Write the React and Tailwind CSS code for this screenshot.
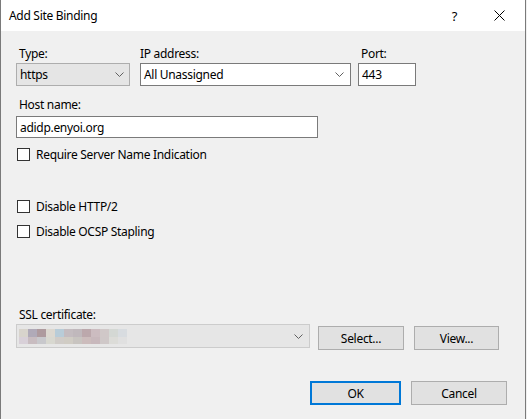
import React from "react";

const Chevron = () => (
  <svg width="9" height="5" viewBox="0 0 9 5" className="shrink-0">
    <path d="M0.5 0.5 L4.5 4.5 L8.5 0.5" fill="none" stroke="#606060" strokeWidth="1" />
  </svg>
);

const Check = ({ label, className = "" }) => (
  <div className={`flex items-center h-[13px] ${className}`}>
    <div className="w-[13px] h-[13px] bg-white border border-[#333333] shrink-0" />
    <span className="ml-[6px] leading-[15px]">{label}</span>
  </div>
);

const blocks1 = ["#d8d4cc", "#b0aab8", "#ae9a9e", "#dcd8d0", "#b8ccd8", "#c4bcc0", "#c0b8bc", "#bca8ac", "#ccbcc0", "#d0c8c8", "#d4d8d4", "#d8dce0"];
const blocks2 = ["#d8d0d8", "#c8bcc0", "#c8c8cc", "#d8d8d0", "#d0ccc8", "#d0ccc4", "#c8c4c0", "#ccbcbc", "#c8b8bc", "#cfc8c8", "#dcdcd8", "#e0e0e0"];

export default function App() {
  return (
    <div
      className="w-[527px] h-[419px] bg-[#f0f0f0] text-black text-[12px] tracking-[-0.3px] overflow-hidden"
      style={{ fontFamily: '"Noto Sans", "Open Sans", sans-serif' }}
    >
      <div className="w-[526px] h-[419px] border-x border-[#7a7a7a] flex flex-col bg-[#f0f0f0]">
        {/* Title bar */}
        <div className="h-[31px] bg-white flex items-center shrink-0">
          <span className="ml-[8px] leading-[16px]">Add Site Binding</span>
          <span className="ml-auto mr-[37px] leading-[16px] text-[13px]">?</span>
          <svg width="11" height="11" viewBox="0 0 11 11" className="mr-[20px]">
            <path d="M0.5 0.5 L10.5 10.5 M10.5 0.5 L0.5 10.5" stroke="#000" strokeWidth="1" />
          </svg>
        </div>

        {/* Body */}
        <div className="flex flex-col pl-[15px] pt-[15px] flex-1">
          {/* Row 1 */}
          <div className="flex">
            <div className="flex flex-col w-[114px]">
              <span className="h-[15px] leading-[15px] ml-[3px]">Type:</span>
              <div className="mt-[2px] h-[23px] bg-[#e5e5e5] border border-[#adadad] flex items-center pl-[3px] pr-[5px]">
                <span className="leading-[15px]">https</span>
                <span className="ml-auto"><Chevron /></span>
              </div>
            </div>
            <div className="flex flex-col w-[211px] ml-[10px]">
              <span className="h-[15px] leading-[15px]">IP address:</span>
              <div className="mt-[2px] h-[23px] bg-white border border-[#7a7a7a] flex items-center pl-[3px] pr-[6px]">
                <span className="leading-[15px]">All Unassigned</span>
                <span className="ml-auto"><Chevron /></span>
              </div>
            </div>
            <div className="flex flex-col w-[58px] ml-[7px]">
              <span className="h-[15px] leading-[15px] ml-[3px]">Port:</span>
              <div className="mt-[2px] h-[23px] bg-white border border-[#7a7a7a] flex items-center pl-[3px]">
                <span className="leading-[15px]">443</span>
              </div>
            </div>
          </div>

          {/* Host name */}
          <span className="mt-[11px] h-[15px] leading-[15px] ml-[3px]">Host name:</span>
          <div className="mt-[4px] w-[302px] h-[22px] bg-white border border-[#7a7a7a] flex items-center pl-[3px]">
            <span className="leading-[15px]">adidp.enyoi.org</span>
          </div>

          <Check label="Require Server Name Indication" className="mt-[10px] ml-[1px]" />
          <Check label="Disable HTTP/2" className="mt-[39px] ml-[1px]" />
          <Check label="Disable OCSP Stapling" className="mt-[12px] ml-[1px]" />

          {/* SSL certificate */}
          <span className="mt-[69px] h-[15px] leading-[15px] ml-[3px]">SSL certificate:</span>
          <div className="flex items-start mt-[2px]">
            <div className="w-[294px] h-[24px] bg-[#e6e6e6] border border-[#cccccc] flex items-center pl-[2px] pr-[6px]">
              <div className="flex flex-col">
                <div className="flex">
                  {blocks1.map((c, i) => (
                    <div key={i} className="w-[9px] h-[8px]" style={{ background: c }} />
                  ))}
                </div>
                <div className="flex">
                  {blocks2.map((c, i) => (
                    <div key={i} className="w-[9px] h-[7px]" style={{ background: c }} />
                  ))}
                </div>
              </div>
              <span className="ml-auto"><Chevron /></span>
            </div>
            <button className="mt-[2px] ml-[8px] w-[86px] h-[24px] bg-[#e1e1e1] border border-[#adadad] leading-[15px]">
              Select...
            </button>
            <button className="mt-[2px] ml-[10px] w-[85px] h-[24px] bg-[#e1e1e1] border border-[#adadad] leading-[15px]">
              View...
            </button>
          </div>

          {/* OK / Cancel */}
          <div className="flex mt-[31px] ml-[294px]">
            <button className="w-[91px] h-[24px] bg-[#e1e1e1] border-2 border-[#0078d7] leading-[15px]">OK</button>
            <button className="ml-[10px] w-[96px] h-[24px] bg-[#e1e1e1] border border-[#adadad] leading-[15px]">
              Cancel
            </button>
          </div>
        </div>
      </div>
    </div>
  );
}
